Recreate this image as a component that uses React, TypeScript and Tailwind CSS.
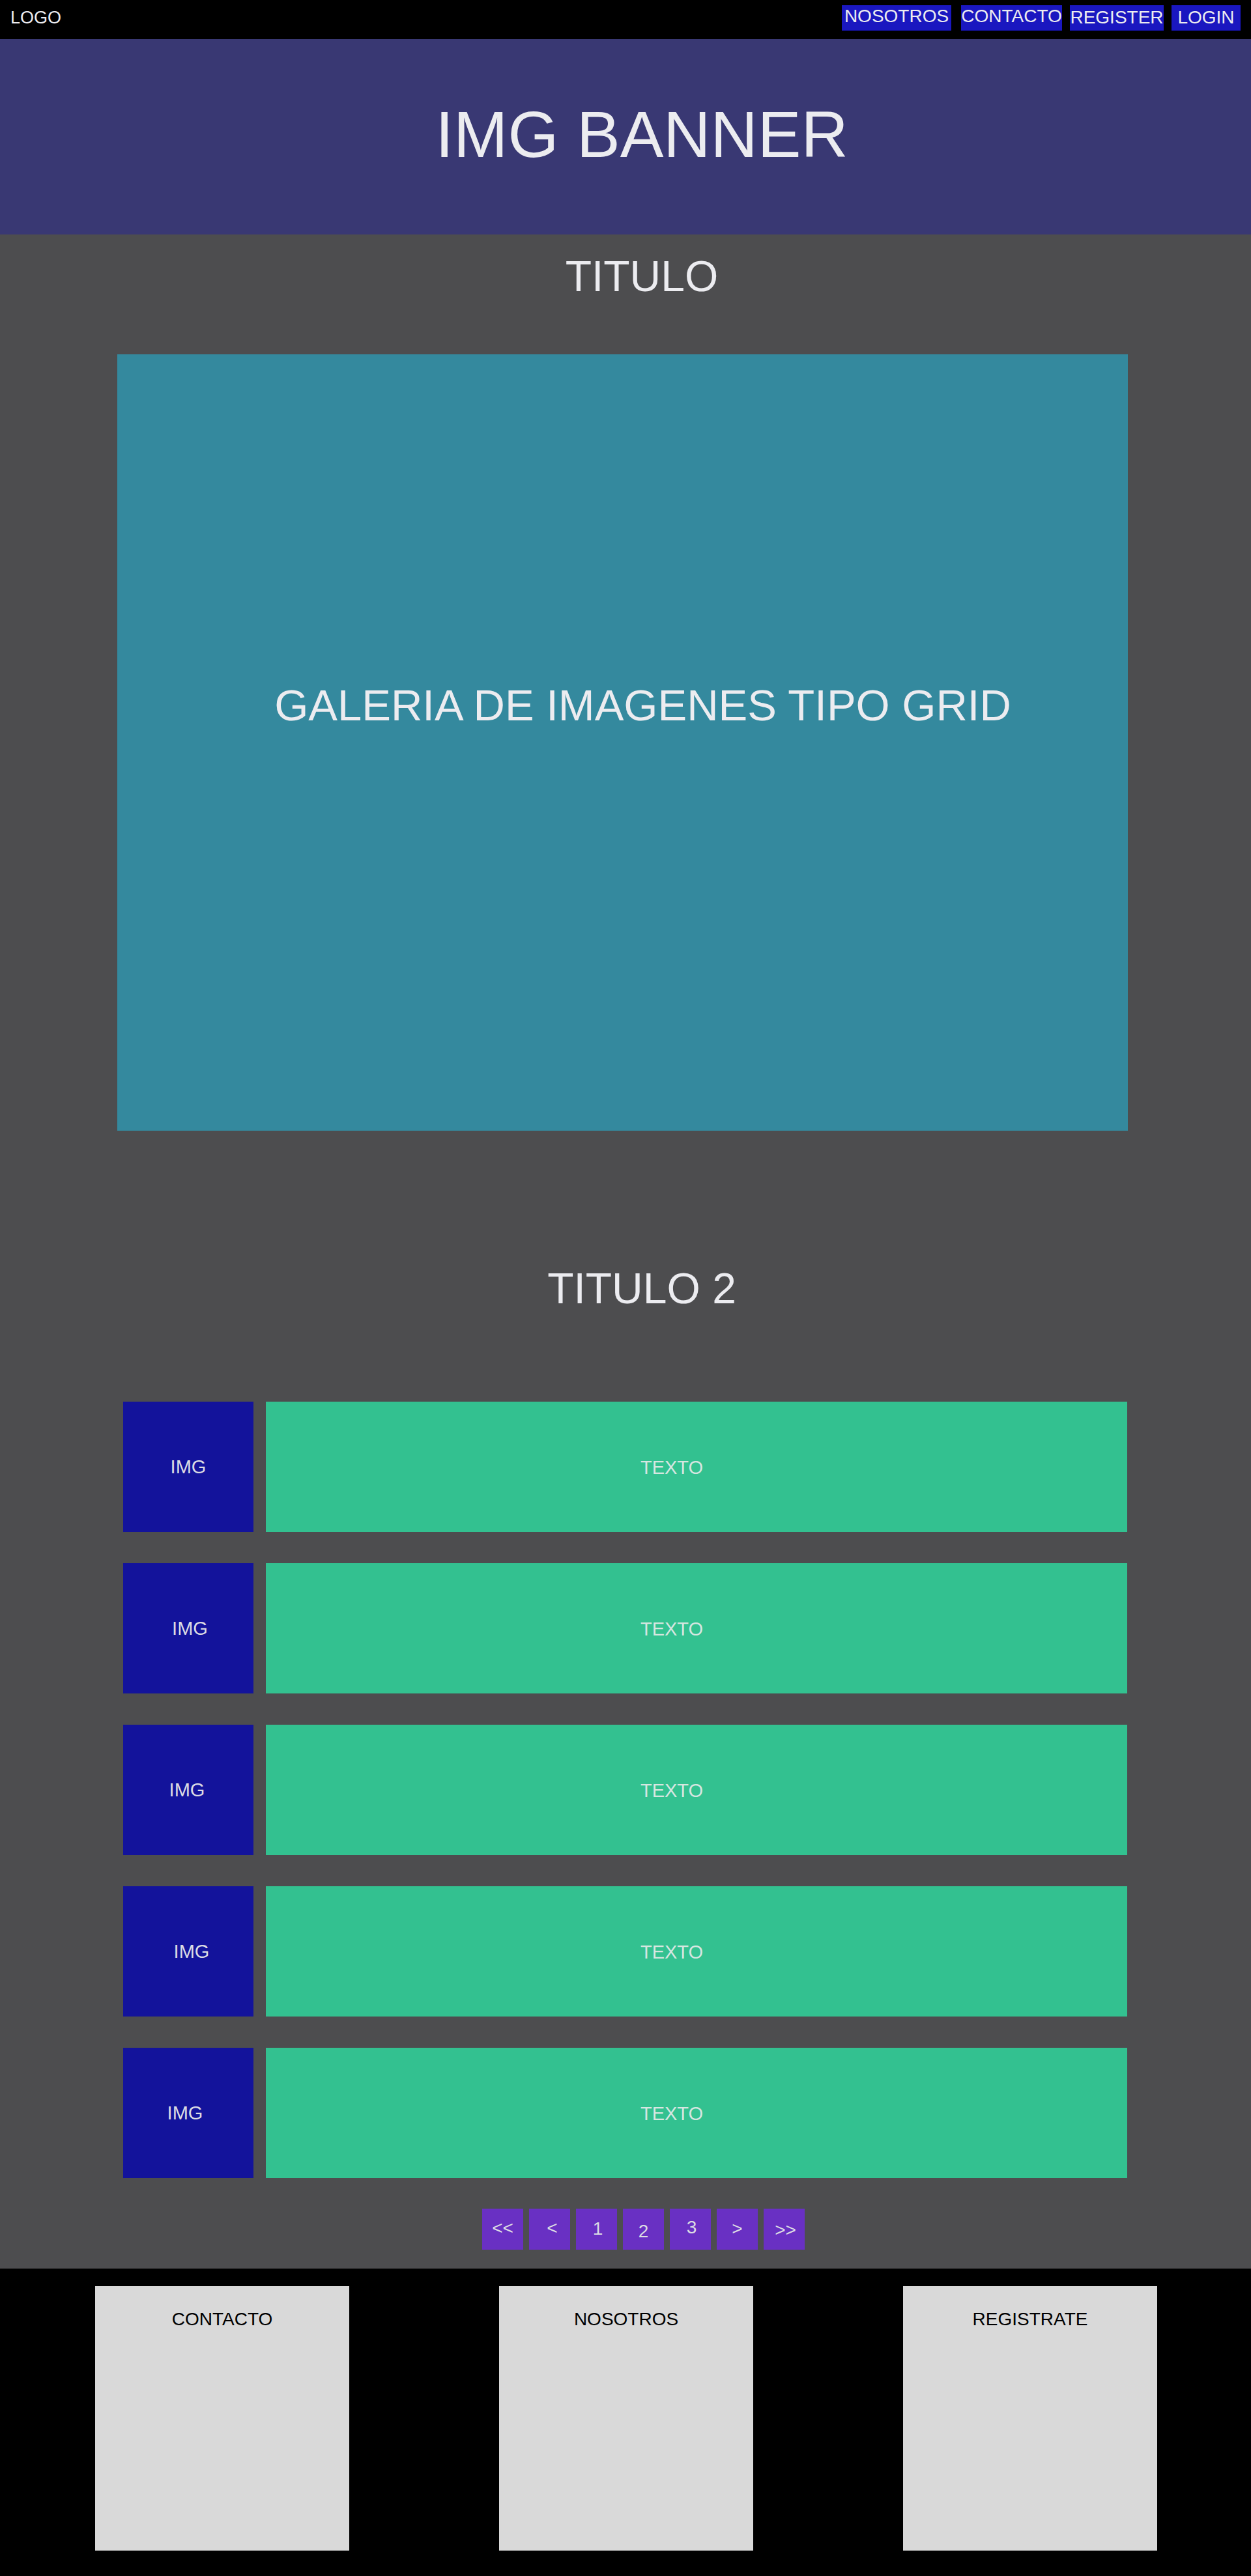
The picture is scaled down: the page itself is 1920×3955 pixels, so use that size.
import React from 'react';

const font = { fontFamily: '"Liberation Sans", Arial, sans-serif' };

const navItems = [
  { label: 'NOSOTROS', cls: 'w-[168px] ml-0 pb-[5px]' },
  { label: 'CONTACTO', cls: 'w-[155px] ml-[15px] pb-[5px]' },
  { label: 'REGISTER', cls: 'w-[144px] ml-[12px] pb-[2px]' },
  { label: 'LOGIN', cls: 'w-[106px] ml-[12px] pb-[1px]' },
];

const rows = [
  { imgShift: 'pl-0' },
  { imgShift: 'pl-[5px]' },
  { imgShift: 'pr-[4px]' },
  { imgShift: 'pl-[10px]' },
  { imgShift: 'pr-[10px]' },
];

const pages = [
  { label: '<<', cls: 'pb-[4px]' },
  { label: '<', cls: 'pb-[4px] pl-[8px]' },
  { label: '1', cls: 'pb-[2px] pl-[4px]' },
  { label: '2', cls: 'pt-[6px]' },
  { label: '3', cls: 'pb-[6px] pl-[4px]' },
  { label: '>', cls: 'pb-[2px]' },
  { label: '>>', cls: 'pt-[2px] pl-[4px]' },
];

const footerCards = ['CONTACTO', 'NOSOTROS', 'REGISTRATE'];

export default function App() {
  return (
    <div className="w-[1920px] min-h-[3955px] bg-black flex flex-col" style={font}>
      {/* header */}
      <header className="h-[60px] bg-black flex items-start justify-between">
        <div className="pt-[14px] pl-[16px] text-[27px] leading-none text-[#ececf0]">LOGO</div>
        <nav className="flex pt-[8px] pr-[16px]">
          {navItems.map((item) => (
            <div
              key={item.label}
              className={`h-[39px] bg-[#1a17c0] text-[#ececf0] text-[28px] leading-none flex items-center justify-center ${item.cls}`}
            >
              {item.label}
            </div>
          ))}
        </nav>
      </header>

      {/* banner */}
      <section className="h-[300px] bg-[#393873] flex items-center justify-center pl-[50px]">
        <h1 className="text-[100px] leading-none text-[#ececf0] pb-[8px]">IMG BANNER</h1>
      </section>

      {/* main */}
      <main className="bg-[#4d4d4f] flex flex-col items-center pt-[31px] pb-[29px]">
        <h2 className="text-[66px] leading-none text-[#ececf0] pl-[50px]">TITULO</h2>

        <div className="mt-[87px] w-[1551px] h-[1192px] ml-[-9px] bg-[#34899e] flex items-center justify-center">
          <span className="text-[67px] leading-none text-[#ececf0] pl-[62px] pb-[116px]">
            GALERIA DE IMAGENES TIPO GRID
          </span>
        </div>

        <h2 className="mt-[209px] text-[66px] leading-none text-[#ececf0] pl-[50px]">TITULO 2</h2>

        <div className="mt-[141px] w-[1920px] flex flex-col gap-[48px] pl-[189px]">
          {rows.map((row, i) => (
            <div key={i} className="flex h-[200px]">
              <div
                className={`w-[200px] h-[200px] bg-[#13139b] flex items-center justify-center text-[29px] leading-none text-[#dcdce4] ${row.imgShift}`}
              >
                IMG
              </div>
              <div className="ml-[19px] w-[1322px] h-[200px] bg-[#33c190] flex items-center justify-center pr-[76px] pt-[2px] text-[29px] leading-none text-[#d6e6e0]">
                TEXTO
              </div>
            </div>
          ))}
        </div>

        <div className="mt-[47px] flex gap-[9px] ml-[55px]">
          {pages.map((p) => (
            <div
              key={p.label}
              className={`w-[63px] h-[63px] bg-[#6930c3] flex items-center justify-center text-[28px] leading-none text-[#dcdce4] ${p.cls}`}
            >
              {p.label}
            </div>
          ))}
        </div>
      </main>

      {/* footer */}
      <footer className="bg-black flex justify-between pl-[146px] pr-[144px] pt-[27px] pb-[39px]">
        {footerCards.map((c) => (
          <div key={c} className="w-[390px] h-[406px] bg-[#d9d9d9] flex justify-center pt-[37px]">
            <span className="text-[28px] leading-none text-black">{c}</span>
          </div>
        ))}
      </footer>
    </div>
  );
}
